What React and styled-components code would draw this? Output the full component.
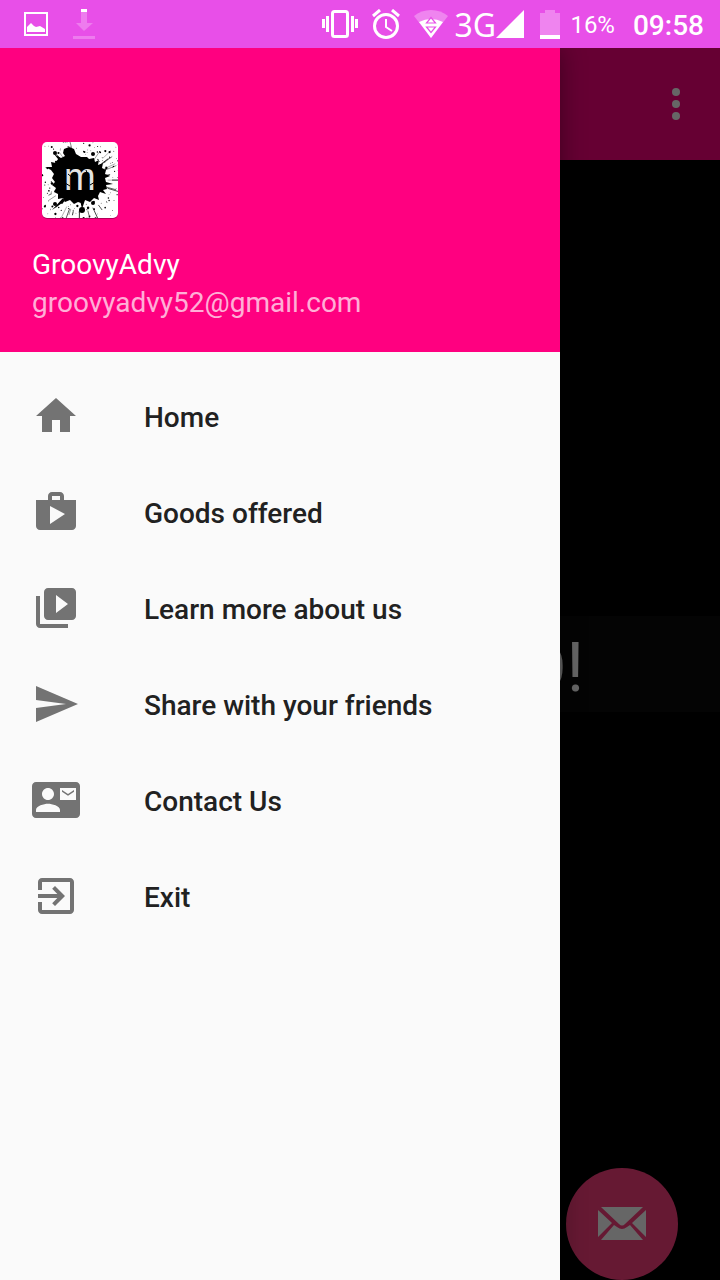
import React from 'react';
import styled, { createGlobalStyle } from 'styled-components';

const GlobalStyle = createGlobalStyle`
  * { box-sizing: border-box; }
  body {
    margin: 0;
    background: #000;
    font-family: Roboto, "Noto Sans", sans-serif;
  }
  h1, h2, p, ul { margin: 0; padding: 0; font: inherit; }
  button { border: 0; padding: 0; background: none; font: inherit; cursor: pointer; }
`;

const Screen = styled.div`
  display: flex;
  flex-direction: column;
  min-height: 100vh;
`;

const StatusBar = styled.header`
  display: flex;
  align-items: center;
  height: 48px;
  padding: 0 16px 0 24px;
  background: #e84fe8;
  color: #fff;
  line-height: 48px;
  svg { display: block; flex: none; }
`;

const Notifications = styled.div`
  display: flex;
  align-items: center;
  gap: 24px;
  flex: 1;
`;

const SystemIcons = styled.div`
  display: flex;
  align-items: center;
  gap: 14px;
`;

const Signal = styled.div`
  display: flex;
  align-items: center;
  gap: 4px;
  margin: 0 2px 0 -8px;
`;

const NetworkType = styled.span`
  width: 38px;
  padding-top: 2px;
  font-family: "Noto Sans", sans-serif;
  font-size: 32px;
`;

const Battery = styled.div`
  display: flex;
  align-items: center;
  gap: 10px;
  font-size: 24px;
`;

const BatteryLevel = styled.span`
  padding-top: 2px;
`;

const Clock = styled.time`
  margin-left: 4px;
  padding-top: 4px;
  font-size: 28px;
  font-weight: 500;
`;

const Stage = styled.div`
  position: relative;
  display: flex;
  flex: 1;
  overflow: hidden;
`;

const Page = styled.div`
  display: flex;
  flex: 1;
  flex-direction: column;
  background: #000;
`;

const Toolbar = styled.div`
  display: flex;
  align-items: center;
  justify-content: flex-end;
  height: 112px;
  padding-right: 20px;
  background: #ff0080;
`;

const MenuButton = styled.button`
  width: 48px;
  height: 48px;
  svg { display: block; }
`;

const Content = styled.main`
  display: flex;
  flex: 1;
  flex-direction: column;
  justify-content: center;
`;

const Greeting = styled.h1`
  height: 96px;
  padding: 4px 136px 0 0;
  background: #0a0a0a;
  color: #fff;
  font-size: 68px;
  line-height: 96px;
  text-align: right;
`;

const ActionRow = styled.div`
  display: flex;
  justify-content: flex-end;
  padding-right: 42px;
`;

const MailButton = styled.button`
  display: grid;
  place-items: center;
  width: 112px;
  height: 112px;
  border-radius: 50%;
  background: #ff4081;
  svg { display: block; }
`;

const Scrim = styled.div`
  position: absolute;
  inset: 0;
  background: rgba(0, 0, 0, 0.6);
`;

const Drawer = styled.aside`
  position: absolute;
  top: 0;
  bottom: 0;
  left: 0;
  width: calc(100% - 160px);
  background: #fafafa;
  box-shadow: 0 0 24px rgba(0, 0, 0, 0.4);
`;

const Profile = styled.div`
  display: flex;
  flex-direction: column;
  height: 304px;
  padding: 84px 32px 0;
  background: #ff0080;
  color: #fff;
  font-size: 28px;
  line-height: 38px;
`;

const Avatar = styled.svg`
  display: block;
  width: 96px;
  height: 96px;
  margin-bottom: 18px;
`;

const Email = styled.p`
  color: rgba(255, 255, 255, 0.7);
`;

const Menu = styled.ul`
  padding-top: 16px;
  list-style: none;
`;

const MenuLink = styled.a`
  display: flex;
  align-items: center;
  gap: 64px;
  height: 96px;
  padding: 0 32px;
  color: #212121;
  font-size: 28px;
  font-weight: 500;
  line-height: 32px;
  text-decoration: none;
  svg { display: block; flex: none; fill: #737373; }
`;

const MenuLabel = styled.span`
  padding-top: 4px;
`;

const menuItems = [
  { label: 'Home', path: 'M10 20v-6h4v6h5v-8h3L12 3 2 12h3v8z' },
  {
    label: 'Goods offered',
    path: 'M16 6V4c0-1.110-.890-2-2-2h-4c-1.110 0-2 .890-2 2v2H2v13c0 1.110.890 2 2 2h16c1.110 0 2-.890 2-2V6h-6zm-6-2h4v2h-4V4zM9 18V9l7.500 4L9 18z',
  },
  {
    label: 'Learn more about us',
    path: 'M4 6H2v14c0 1.100.900 2 2 2h14v-2H4V6zm16-4H8c-1.100 0-2 .900-2 2v12c0 1.100.900 2 2 2h12c1.100 0 2-.900 2-2V4c0-1.100-.900-2-2-2zm-8 12.500v-9l6 4.500-6 4.500z',
  },
  { label: 'Share with your friends', path: 'M2 21 23 12 2 3v7l15 2-15 2z' },
  {
    label: 'Contact Us',
    path: 'M22 3H2C.900 3 0 3.900 0 5v14c0 1.100.900 2 2 2h20c1.100 0 2-.900 2-2V5c0-1.100-.900-2-2-2zM8 6c1.660 0 3 1.340 3 3s-1.340 3-3 3-3-1.340-3-3 1.340-3 3-3zm6 12H2v-1c0-2 4-3.100 6-3.100s6 1.100 6 3.100v1zm8-6h-8V6h8v6zm-1-4.500V7l-3 2-3-2v.900l3 2 3-2z',
  },
  {
    label: 'Exit',
    path: 'M10.090 15.590 11.500 17l5-5-5-5-1.410 1.410L12.670 11H3v2h9.670l-2.580 2.590zM19 3H5c-1.110 0-2 .900-2 2v4h2V5h14v14H5v-4H3v4c0 1.100.890 2 2 2h14c1.100 0 2-.900 2-2V5c0-1.100-.900-2-2-2z',
  },
];

// Deterministic ink splatter: thin streaks and droplets thrown out from the centre.
function createSplatter() {
  let seed = 52;
  const random = () => {
    seed = (seed * 16807) % 2147483647;
    return seed / 2147483647;
  };
  const streaks = [];
  for (let i = 0; i < 26; i += 1) {
    const angle = random() * Math.PI * 2;
    const start = 24 + random() * 10;
    const end = start + 3 + random() * 9;
    const dx = Math.cos(angle);
    const dy = Math.sin(angle);
    streaks.push({ x1: 48 + dx * start, y1: 48 + dy * start, x2: 48 + dx * end, y2: 48 + dy * end, w: 0.3 + random() * 0.5 });
  }
  const drops = [];
  for (let i = 0; i < 190; i += 1) {
    const angle = random() * Math.PI * 2;
    const distance = 25 + random() * 25;
    drops.push({ x: 48 + Math.cos(angle) * distance, y: 48 + Math.sin(angle) * distance, r: 0.3 + random() * random() * 1.2 });
  }
  return { streaks, drops };
}

const splatter = createSplatter();

function ProfileAvatar() {
  return (
    <Avatar viewBox="0 0 96 96" role="img" aria-label="GroovyAdvy logo">
      <defs>
        <clipPath id="tile"><rect x="10" y="10" width="76" height="76" rx="5" /></clipPath>
      </defs>
      <rect x="10" y="11" width="76" height="76" rx="5" fill="#000" opacity="0.3" />
      <rect x="10" y="10" width="76" height="76" rx="5" fill="#fff" />
      <g clipPath="url(#tile)">
        <path d="M33 24l-2-3 1-4 5-2 5 2 2 5 5 3 6 0 2 2 5-1 1 4 4-2-1 5 5-2-1 5 4 2-1 4 5 2-5 2 1 4 7 2-7 1 1 4-4 1 3 4-6-2-2 4 1 4-5-2-4 4-5-2-4 3-3-1-4 2-4-4-5 2-2-4-5 1 0-5-4-2 2-4-4-3 3-3-3-4 2-4-3-4-6-3 7 0-1-5 5 1 2-4-4-5 7 4z" />
        {splatter.streaks.map((s, i) => (
          <line key={i} x1={s.x1} y1={s.y1} x2={s.x2} y2={s.y2} stroke="#000" strokeWidth={s.w} strokeLinecap="round" />
        ))}
        {splatter.drops.map((d, i) => <circle key={i} cx={d.x} cy={d.y} r={d.r} />)}
        <circle cx="27" cy="31" r="3" />
        <circle cx="23" cy="21" r="2" />
        <circle cx="61" cy="22" r="2" />
        <circle cx="50" cy="78" r="3" />
        <circle cx="61" cy="71" r="2" />
        <circle cx="23" cy="72" r="2" />
        <path d="M48 68l2 9 3-9zM20 78l11-12 2 3z" />
      </g>
      <text x="32" y="58" fontFamily="Liberation Sans, sans-serif" fontSize="38" fill="#e4e4e4">m</text>
      <path d="M36 42l6 5M54 38l3 8M33 51l5 3M58 53l5-3" stroke="#000" strokeWidth="1" />
    </Avatar>
  );
}

export default function App() {
  return (
    <Screen>
      <GlobalStyle />
      <StatusBar>
        <Notifications>
          <svg width="24" height="24" viewBox="0 0 24 24" fill="#fff">
            <path d="M0 0h24v24H0zM2 2v20h20V2z" fillRule="evenodd" />
            <path d="M3 20v-5l4-4 3 3 2 1 4-1 5 3v3z" />
          </svg>
          <svg width="24" height="30" viewBox="0 0 24 30" fill="#fff">
            <path d="M9 3h6v11h6l-9 8-8-8h5zM1 27h22v3H1z" opacity="0.25" />
            <path d="M9 0h6v3H9z" />
          </svg>
        </Notifications>
        <SystemIcons>
          <svg width="36" height="28" viewBox="0 0 36 28" fill="#fff">
            <path d="M0 9h3v9H0zM4 6h3v16H4zM29 6h3v16h-3zM33 9h3v9h-3z" />
            <rect x="10.500" y="1.500" width="15" height="25" rx="2" fill="none" stroke="#fff" strokeWidth="3" />
          </svg>
          <svg width="28" height="30" viewBox="0 0 28 30" fill="none" stroke="#fff">
            <circle cx="14" cy="17" r="11.500" strokeWidth="3" />
            <path d="M1 7l7-6M20 1l7 6" strokeWidth="3" />
            <path d="M14 10v8l6 4" strokeWidth="2" />
          </svg>
          <svg width="34" height="28" viewBox="0 0 34 28">
            <path d="M0 6C9-2 25-2 34 6L17 28z" fill="#fff" opacity="0.3" />
            <path d="M5 12q12-6 24 0L17 28z" fill="#fff" />
            <path d="M12.500 13h9L17 7.500zM12.500 17h9L17 22.500z" fill="#fff" stroke="#e84fe8" strokeWidth="1.200" />
          </svg>
          <Signal>
            <NetworkType>3G</NetworkType>
            <svg width="28" height="28" viewBox="0 0 28 28"><path d="M28 0v28H0z" fill="#fff" /></svg>
          </Signal>
          <Battery>
            <svg width="20" height="29" viewBox="0 0 20 29" fill="#fff">
              <path d="M5 0h10v3h5v22H0V3h5z" opacity="0.3" />
              <path d="M0 25h20v4H0z" />
            </svg>
            <BatteryLevel>16%</BatteryLevel>
          </Battery>
          <Clock>09:58</Clock>
        </SystemIcons>
      </StatusBar>
      <Stage>
        <Page>
          <Toolbar>
            <MenuButton aria-label="More options">
              <svg width="48" height="48" viewBox="0 0 48 48" fill="#fff">
                <circle cx="24" cy="12" r="4" />
                <circle cx="24" cy="24" r="4" />
                <circle cx="24" cy="36" r="4" />
              </svg>
            </MenuButton>
          </Toolbar>
          <Content>
            <Greeting>O!</Greeting>
          </Content>
          <ActionRow>
            <MailButton aria-label="Send email">
              <svg width="48" height="34" viewBox="0 0 48 34" fill="#fff">
                <path d="M3 0h42L27 17q-3 3-6 0zM0 3l14 13L0 30zM48 3v27L34 16zM16 18l3 2q5 4 10 0l3-2 13 15H3z" />
              </svg>
            </MailButton>
          </ActionRow>
        </Page>
        <Scrim />
        <Drawer>
          <Profile>
            <ProfileAvatar />
            <h2>GroovyAdvy</h2>
            <Email>groovyadvy52@gmail.com</Email>
          </Profile>
          <nav>
            <Menu>
              {menuItems.map((item) => (
                <li key={item.label}>
                  <MenuLink href="#">
                    <svg width="48" height="48" viewBox="0 0 24 24"><path d={item.path} fillRule="evenodd" /></svg>
                    <MenuLabel>{item.label}</MenuLabel>
                  </MenuLink>
                </li>
              ))}
            </Menu>
          </nav>
        </Drawer>
      </Stage>
    </Screen>
  );
}
